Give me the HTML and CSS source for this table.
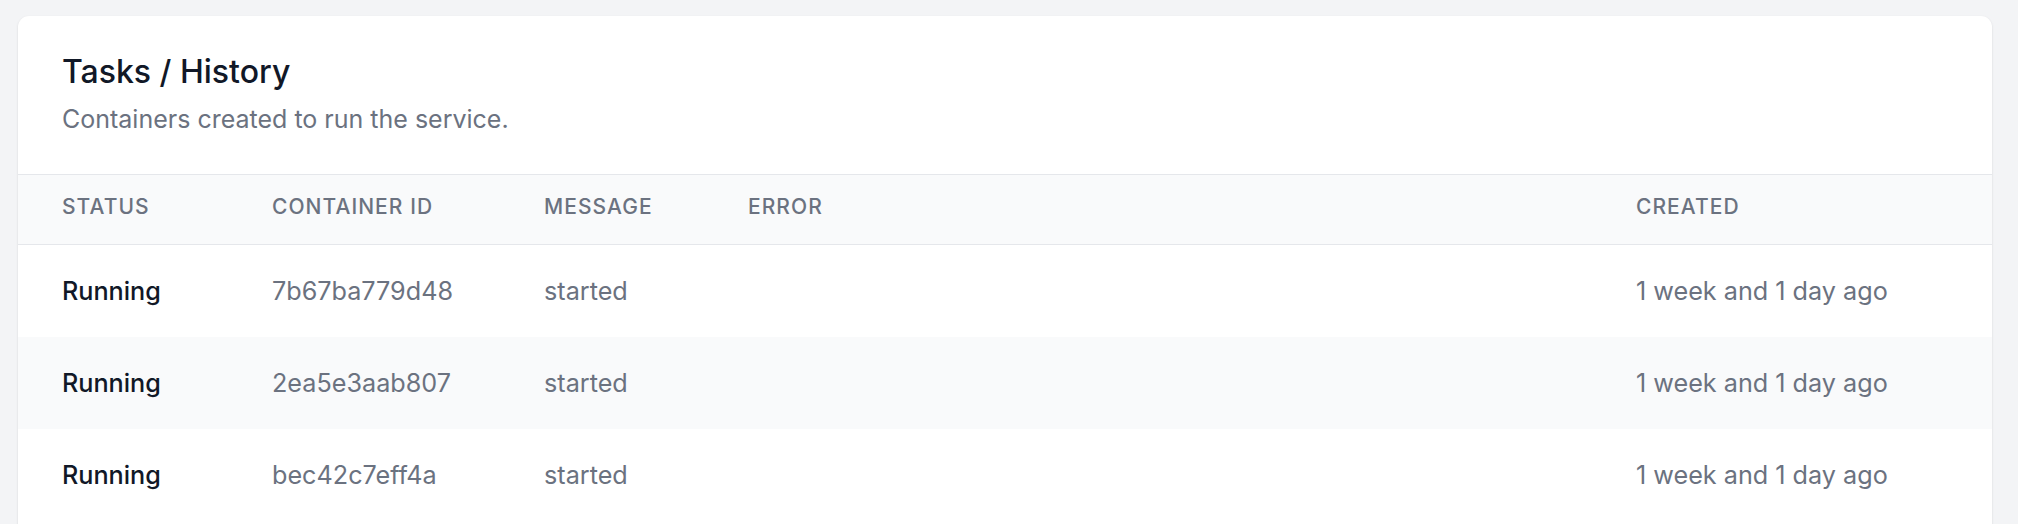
FILE: index.html
```html
<!DOCTYPE html>
<html lang="en">
<head>
<meta charset="utf-8">
<title>Tasks / History</title>
<link rel="stylesheet" href="styles.css">
</head>
<body>
<div class="page">
  <section class="card">
    <header class="card-header">
      <h2 class="card-title">Tasks / History</h2>
      <p class="card-subtitle">Containers created to run the service.</p>
    </header>
    <table class="tasks">
      <colgroup>
        <col class="c-status">
        <col class="c-id">
        <col class="c-msg">
        <col class="c-err">
        <col class="c-created">
      </colgroup>
      <thead>
        <tr>
          <th>Status</th>
          <th>Container ID</th>
          <th>Message</th>
          <th>Error</th>
          <th>Created</th>
        </tr>
      </thead>
      <tbody>
        <tr>
          <td class="status">Running</td>
          <td>7b67ba779d48</td>
          <td>started</td>
          <td></td>
          <td>1 week and 1 day ago</td>
        </tr>
        <tr class="alt">
          <td class="status">Running</td>
          <td>2ea5e3aab807</td>
          <td>started</td>
          <td></td>
          <td>1 week and 1 day ago</td>
        </tr>
        <tr>
          <td class="status">Running</td>
          <td>bec42c7eff4a</td>
          <td>started</td>
          <td></td>
          <td>1 week and 1 day ago</td>
        </tr>
      </tbody>
    </table>
  </section>
</div>
</body>
</html>
```
FILE: styles.css
```css
* { box-sizing: border-box; }
html, body {
  margin: 0;
  padding: 0;
  background: #f3f4f6;
  font-family: Inter, "Noto Sans", "Liberation Sans", sans-serif;
  -webkit-font-smoothing: antialiased;
}
.page {
  padding: 16px 26px 24px 18px;
}
.card {
  background: #ffffff;
  border-radius: 11px;
  box-shadow: 0 1px 3px rgba(0, 0, 0, 0.08), 0 1px 2px rgba(0, 0, 0, 0.05);
  overflow: hidden;
  padding-bottom: 24px;
}
.card-header {
  padding: 34px 44px 37px 44px;
}
.card-title {
  margin: 0;
  font-size: 32px;
  line-height: 44px;
  font-weight: 500;
  color: #111827;
}
.card-subtitle {
  margin: 7px 0 0 0;
  font-size: 25px;
  line-height: 36px;
  color: #6b7280;
}
.tasks {
  width: 100%;
  border-collapse: collapse;
  table-layout: fixed;
}
.c-status { width: 210px; }
.c-id { width: 272px; }
.c-msg { width: 204px; }
.c-err { width: 888px; }
.c-created { width: auto; }
.tasks thead tr {
  background: #f9fafb;
  border-top: 1px solid #e5e7eb;
  border-bottom: 1px solid #e5e7eb;
}
.tasks th {
  text-align: left;
  font-size: 21px;
  line-height: 28px;
  font-weight: 500;
  letter-spacing: 0.05em;
  text-transform: uppercase;
  color: #6b7280;
  padding: 18px 44px 23px 44px;
}
.tasks td {
  font-size: 25.2px;
  line-height: 36px;
  color: #6b7280;
  padding: 28px 44px 28px 44px;
  white-space: nowrap;
}
.tasks td.status {
  color: #111827;
  font-weight: 500;
}
.tasks tr.alt {
  background: #f9fafb;
}
```
